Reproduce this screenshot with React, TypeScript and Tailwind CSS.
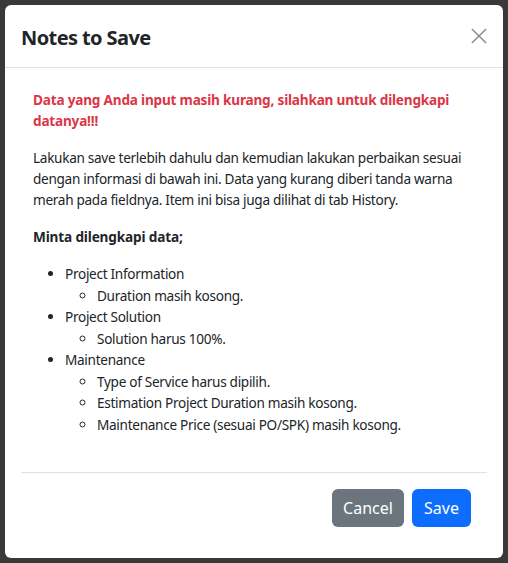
import React from "react";

export default function App() {
  return (
    <div
      className="w-[508px] h-[563px] bg-[#393939] p-[5px] overflow-hidden"
      style={{ fontFamily: '"Noto Sans", "Open Sans", sans-serif' }}
    >
      <div className="w-[498px] h-[553px] bg-white rounded-[6px] flex flex-col text-[#212529]">
        <div className="h-[63px] border-b border-[#dee2e6] pl-4 pr-4 flex items-center justify-between">
          <h5 className="text-[20px] leading-[30px] font-bold tracking-[-0.6px] pt-[3px]">Notes to Save</h5>
          <button className="w-[16px] h-[16px] flex items-center justify-center">
            <svg width="18" height="18" viewBox="0 0 18 18">
              <path d="M1 1 L17 17 M17 1 L1 17" stroke="#8a8a8a" strokeWidth="1.6" fill="none" />
            </svg>
          </button>
        </div>
        <div className="flex-1 px-[28px] pt-[21px] text-[13.6px] leading-[21px] tracking-[-0.3px]">
          <p className="text-[#dc3545] font-bold mb-4 tracking-[-0.2px]">
            Data yang Anda input masih kurang, silahkan untuk dilengkapi datanya!!!
          </p>
          <p className="mb-4">
            Lakukan save terlebih dahulu dan kemudian lakukan perbaikan sesuai dengan informasi di bawah ini. Data yang kurang diberi tanda warna merah pada fieldnya. Item ini bisa juga dilihat di tab History.
          </p>
          <p className="font-bold mb-4 tracking-[-0.15px]">Minta dilengkapi data;</p>
          <ul className="list-disc pl-8 leading-[21.5px]">
            <li>
              Project Information
              <ul className="list-[circle] pl-8">
                <li>Duration masih kosong.</li>
              </ul>
            </li>
            <li>
              Project Solution
              <ul className="list-[circle] pl-8">
                <li>Solution harus 100%.</li>
              </ul>
            </li>
            <li>
              Maintenance
              <ul className="list-[circle] pl-8">
                <li>Type of Service harus dipilih.</li>
                <li>Estimation Project Duration masih kosong.</li>
                <li>Maintenance Price (sesuai PO/SPK) masih kosong.</li>
              </ul>
            </li>
          </ul>
        </div>
        <div className="mx-4 border-t border-[#dee2e6] pt-4 pb-[31px] pr-4 flex justify-end gap-2">
          <button className="w-[72px] h-[38px] rounded-[6px] bg-[#6c757d] text-white text-[16px] flex items-center justify-center">
            Cancel
          </button>
          <button className="w-[59px] h-[38px] rounded-[6px] bg-[#0d6efd] text-white text-[16px] flex items-center justify-center">
            Save
          </button>
        </div>
      </div>
    </div>
  );
}
